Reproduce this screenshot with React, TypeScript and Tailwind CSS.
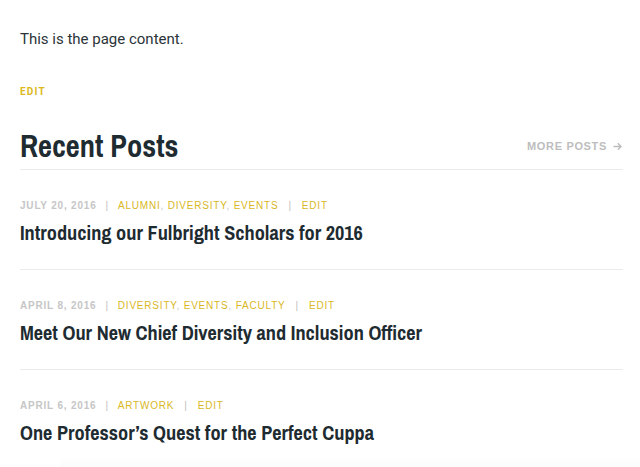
const posts = [
  {
    date: "July 20, 2016",
    cats: ["Alumni", "Diversity", "Events"],
    title: "Introducing our Fulbright Scholars for 2016",
  },
  {
    date: "April 8, 2016",
    cats: ["Diversity", "Events", "Faculty"],
    title: "Meet Our New Chief Diversity and Inclusion Officer",
  },
  {
    date: "April 6, 2016",
    cats: ["Artwork"],
    title: "One Professor\u2019s Quest for the Perfect Cuppa",
  },
];

const narrow = "font-['Archivo_Narrow','Liberation_Sans',Arial,sans-serif] font-bold text-[#1e2b31]";

export default function App() {
  return (
    <div className="relative min-h-[467px] overflow-hidden bg-white pl-5 pr-[17px] pt-[29px] font-['Roboto',sans-serif] text-[#2b3438]">
      <p className="text-[15px] leading-[20px]">This is the page content.</p>

      <a href="#" className="mt-[35px] block text-[10px] font-bold uppercase tracking-[0.12em] text-[#dcb820]">
        Edit
      </a>

      <div className="mt-[27px] flex items-center justify-between border-b border-[#ebebeb] pb-[3px]">
        <h2 className={`${narrow} text-[30.5px] leading-[40px]`}>Recent Posts</h2>
        <a
          href="#"
          className="mr-[1px] mt-[1px] flex items-center gap-[6px] font-['Liberation_Sans',Arial,sans-serif] text-[11px] font-bold uppercase tracking-[0.06em] text-[#bdbdbd]"
        >
          More Posts
          <svg width="9" height="9" viewBox="0 0 9 9" fill="none" stroke="currentColor" strokeWidth="1.4">
            <path d="M0.5 4.5h7.5M4.8 1.3l3.2 3.2-3.2 3.2" />
          </svg>
        </a>
      </div>

      <div>
        {posts.map((post, i) => (
          <article
            key={i}
            className={`pt-[29px] pb-[23px] ${i < posts.length - 1 ? "border-b border-[#ebebeb]" : ""}`}
          >
            <div className="flex items-center font-['Liberation_Sans',Arial,sans-serif] text-[10px] uppercase leading-[14px] tracking-[0.08em]">
              <span className="font-bold tracking-[0.08em] text-[#c6c6c6]">{post.date}</span>
              <span className="mx-[9px] text-[#bdbdbd]">|</span>
              <span className="text-[#d9b725]">
                {post.cats.map((c, j) => (
                  <span key={j}>
                    {c}
                    {j < post.cats.length - 1 && <span className="text-[#c6c6c6]">, </span>}
                  </span>
                ))}
              </span>
              <span className="mx-[10px] text-[#bdbdbd]">|</span>
              <span className="text-[#d9b725]">Edit</span>
            </div>
            <h3 className={`${narrow} mt-[7px] text-[20.3px] leading-[26px]`}>{post.title}</h3>
          </article>
        ))}
      </div>

      <div className="pointer-events-none absolute bottom-0 left-[60px] right-0 h-[12px] bg-gradient-to-b from-transparent to-[#fafafa]" />
    </div>
  );
}
